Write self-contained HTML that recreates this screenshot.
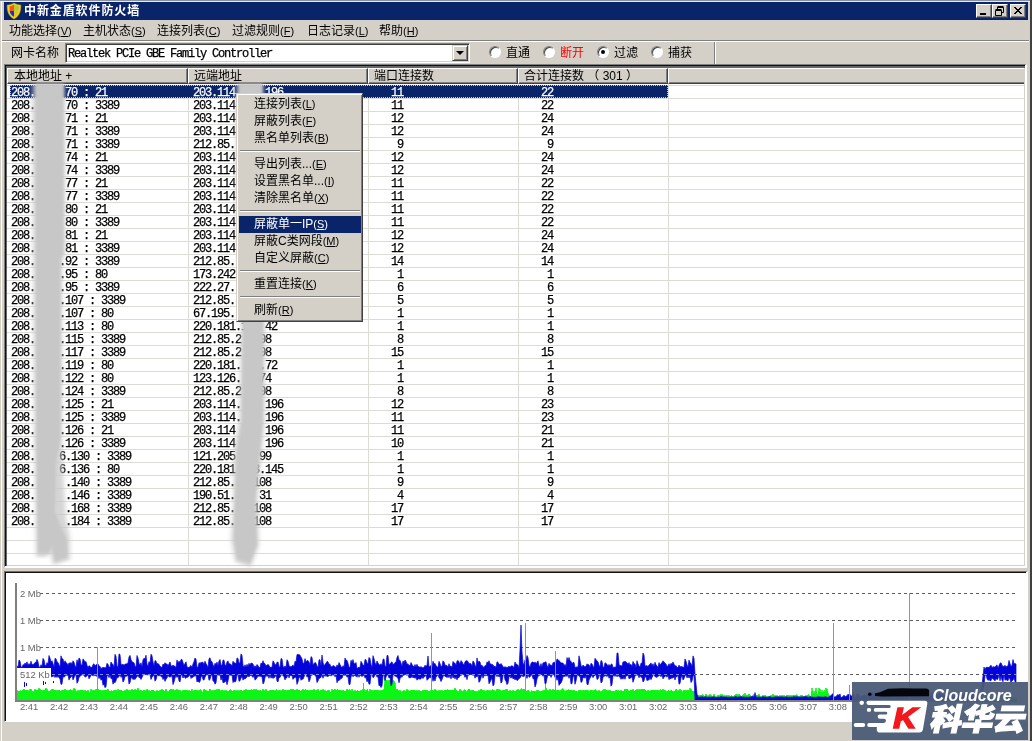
<!DOCTYPE html><html><head><meta charset="utf-8"><title>中新金盾软件防火墙</title><style>
*{box-sizing:border-box;margin:0;padding:0}
html,body{width:1032px;height:741px;overflow:hidden;background:#d4d0c8}
body{position:relative;font-family:"Liberation Sans", "Noto Sans CJK SC", sans-serif;font-size:12px;color:#000;line-height:1}
.abs{position:absolute}
.mono{font-family:"Liberation Mono","Noto Sans CJK SC",monospace;font-size:12px;letter-spacing:-1.2px;white-space:pre;-webkit-text-stroke:0.25px}
.cj{font-family:"Liberation Sans", "Noto Sans CJK SC", sans-serif;font-size:12px;white-space:pre}
u{text-decoration:underline;text-underline-offset:1px}
.lat{font-family:"Liberation Sans",sans-serif;font-size:11px}
#title{left:4px;top:2px;width:1024px;height:18px;background:#0a246a}
#title .t{left:20px;top:2px;color:#fff;font-weight:bold;font-size:12px;letter-spacing:0.9px;white-space:pre;line-height:14px}
.tbtn{top:2px;width:16px;height:14px;background:#d4d0c8;border:1px solid;border-color:#fff #404040 #404040 #fff;box-shadow:inset -1px -1px 0 #808080}
.menu-i{top:23px;height:16px;line-height:16px;white-space:pre}
.hdr{top:68px;height:16px;background:#d4d0c8;border-top:1px solid #fff;border-left:1px solid #fff;border-right:1px solid #404040;border-bottom:1px solid #404040;box-shadow:inset -1px -1px 0 #808080}
.hdr span{position:absolute;left:5px;top:0;line-height:14px;white-space:pre}
.row{position:absolute;left:7px;width:1017px;height:13px}
.row span{position:absolute;top:2px;line-height:13px}
.gl{position:absolute;left:7px;width:1017px;height:1px;background:#dddbd6}
.vl{position:absolute;top:84px;width:1px;height:481px;background:#dddbd6}
.radio{width:12px;height:12px;border-radius:50%;background:#fff;border:1px solid;border-color:#808080 #fff #fff #808080;box-shadow:inset 1px 1px 0 #404040}
.mi{position:absolute;left:2px;width:122px;height:17px;line-height:17px;padding-left:15px;white-space:pre}
.msep{position:absolute;left:3px;width:120px;height:2px;border-top:1px solid #808080;border-bottom:1px solid #fff}
</style></head><body><div id="root" class="abs" style="left:0;top:0;width:1032px;height:741px;will-change:transform">
<div class="abs" style="left:0;top:0;width:1032px;height:1px;background:#8890a4"></div>
<div class="abs" style="left:0;top:1px;width:1032px;height:1px;background:#e4ecfa"></div>
<div class="abs" style="left:1px;top:1px;width:1px;height:740px;background:#fff"></div>
<div class="abs" style="left:1030px;top:0;width:2px;height:741px;background:#404040"></div>
<div id="title" class="abs">
<svg class="abs" style="left:2px;top:0" width="16" height="18" viewBox="0 0 16 18">
<path d="M8 1 C6 2.4 3.5 3 1.2 3 C1 9 2.5 14 8 17 C13.5 14 15 9 14.8 3 C12.5 3 10 2.4 8 1Z" fill="#f0d820" stroke="#c8a810" stroke-width="0.6"/>
<path d="M8 2.5 C6.5 3.5 5 4 3.6 4.2 L3.6 9 L8 9Z" fill="#f05a18"/>
<path d="M3.6 9 L8 9 L8 14.8 C5.6 13.6 4 11.6 3.6 9Z" fill="#2030d8"/>
<path d="M8 2.5 C9.5 3.5 11.5 4 13 4.2 C13 9 12 13 8 15.4Z" fill="#d8c828"/>
<path d="M8 2.5 C9.5 3.5 11.5 4 13 4.2 L13 8 L8 8Z" fill="#b8c838"/>
</svg>
<div class="abs t">中新金盾软件防火墙</div>
<div class="abs tbtn" style="left:972px"><div class="abs" style="left:3px;top:8px;width:6px;height:2px;background:#000"></div></div>
<div class="abs tbtn" style="left:988px"><svg class="abs" style="left:1px;top:0" width="12" height="12" viewBox="0 0 12 12"><g fill="none" stroke="#000" stroke-width="1"><path d="M3.5 2.5h6v5h-2"/><path d="M3.5 1.5h6" /><path d="M1.5 5.5h6v5h-6z"/><path d="M1.5 4.5h6"/><path d="M3.5 2v2"/></g></svg></div>
<div class="abs tbtn" style="left:1006px"><svg class="abs" style="left:2px;top:1px" width="10" height="9" viewBox="0 0 10 9"><path d="M1 1l7 7M2 1l7 7M8 1l-7 7M9 1l-7 7" stroke="#000" stroke-width="1" fill="none"/></svg></div>
</div>
<div class="abs menu-i" style="left:9px">功能选择<span class="lat">(<u>V</u>)</span></div>
<div class="abs menu-i" style="left:83px">主机状态<span class="lat">(<u>S</u>)</span></div>
<div class="abs menu-i" style="left:157px">连接列表<span class="lat">(<u>C</u>)</span></div>
<div class="abs menu-i" style="left:232px">过滤规则<span class="lat">(<u>F</u>)</span></div>
<div class="abs menu-i" style="left:307px">日志记录<span class="lat">(<u>L</u>)</span></div>
<div class="abs menu-i" style="left:379px">帮助<span class="lat">(<u>H</u>)</span></div>
<div class="abs" style="left:2px;top:40px;width:1027px;height:1px;background:#808080"></div>
<div class="abs" style="left:2px;top:41px;width:1027px;height:1px;background:#fff"></div>
<div class="abs" style="left:714px;top:42px;width:1px;height:22px;background:#808080"></div>
<div class="abs" style="left:715px;top:42px;width:1px;height:22px;background:#fff"></div>
<div class="abs cj" style="left:11px;top:46px;line-height:14px">网卡名称</div>
<div class="abs" style="left:65px;top:43px;width:405px;height:20px;background:#fff;border:1px solid;border-color:#808080 #fff #fff #808080;box-shadow:inset 1px 1px 0 #404040, inset -1px -1px 0 #d4d0c8"></div>
<div class="abs mono" style="left:68px;top:47px;line-height:14px">Realtek PCIe GBE Family Controller</div>
<div class="abs" style="left:452px;top:45px;width:16px;height:16px;background:#d4d0c8;border:1px solid;border-color:#d4d0c8 #404040 #404040 #d4d0c8;box-shadow:inset 1px 1px 0 #fff, inset -1px -1px 0 #808080"><div class="abs" style="left:3px;top:5px;width:0;height:0;border-left:4px solid transparent;border-right:4px solid transparent;border-top:4px solid #000"></div></div>
<div class="abs radio" style="left:489px;top:46px"></div>
<div class="abs cj" style="left:506px;top:46px;line-height:14px;color:#000">直通</div>
<div class="abs radio" style="left:543px;top:46px"></div>
<div class="abs cj" style="left:560px;top:46px;line-height:14px;color:#f00">断开</div>
<div class="abs radio" style="left:597px;top:46px"><div class="abs" style="left:3px;top:3px;width:4px;height:4px;border-radius:50%;background:#000"></div></div>
<div class="abs cj" style="left:614px;top:46px;line-height:14px;color:#000">过滤</div>
<div class="abs radio" style="left:651px;top:46px"></div>
<div class="abs cj" style="left:668px;top:46px;line-height:14px;color:#000">捕获</div>
<div class="abs" style="left:4px;top:64px;width:1023px;height:504px;background:#fff;border:solid;border-width:1px 2px 2px 1px;border-color:#808080 #fff #fff #808080;box-shadow:inset 1px 1px 0 #101010, inset 2px 3px 0 #686868, inset -1px -1px 0 #d4d0c8"></div>
<div class="abs hdr cj" style="left:7px;width:181px"><span style="left:6px">本地地址 +</span></div>
<div class="abs hdr cj" style="left:188px;width:180px"><span>远端地址</span></div>
<div class="abs hdr cj" style="left:368px;width:150px"><span>端口连接数</span></div>
<div class="abs hdr cj" style="left:518px;width:150px"><span>合计连接数 （ 301 ）</span></div>
<div class="abs hdr cj" style="left:668px;width:356px;border-right:none;box-shadow:inset 0 -1px 0 #808080"><span></span></div>
<div class="gl" style="top:85px"></div>
<div class="gl" style="top:98px"></div>
<div class="gl" style="top:111px"></div>
<div class="gl" style="top:124px"></div>
<div class="gl" style="top:137px"></div>
<div class="gl" style="top:150px"></div>
<div class="gl" style="top:163px"></div>
<div class="gl" style="top:176px"></div>
<div class="gl" style="top:189px"></div>
<div class="gl" style="top:202px"></div>
<div class="gl" style="top:215px"></div>
<div class="gl" style="top:228px"></div>
<div class="gl" style="top:241px"></div>
<div class="gl" style="top:254px"></div>
<div class="gl" style="top:267px"></div>
<div class="gl" style="top:280px"></div>
<div class="gl" style="top:293px"></div>
<div class="gl" style="top:306px"></div>
<div class="gl" style="top:319px"></div>
<div class="gl" style="top:332px"></div>
<div class="gl" style="top:345px"></div>
<div class="gl" style="top:358px"></div>
<div class="gl" style="top:371px"></div>
<div class="gl" style="top:384px"></div>
<div class="gl" style="top:397px"></div>
<div class="gl" style="top:410px"></div>
<div class="gl" style="top:423px"></div>
<div class="gl" style="top:436px"></div>
<div class="gl" style="top:449px"></div>
<div class="gl" style="top:462px"></div>
<div class="gl" style="top:475px"></div>
<div class="gl" style="top:488px"></div>
<div class="gl" style="top:501px"></div>
<div class="gl" style="top:514px"></div>
<div class="gl" style="top:527px"></div>
<div class="gl" style="top:540px"></div>
<div class="gl" style="top:553px"></div>
<div class="vl" style="left:188px"></div>
<div class="vl" style="left:368px"></div>
<div class="vl" style="left:518px"></div>
<div class="vl" style="left:668px"></div>
<div class="abs" style="left:10px;top:85px;width:658px;height:13px;background:#0a246a;outline:1px dotted #d8c890;outline-offset:-1px"></div>
<div class="row mono" style="top:85px;color:#fff;"><span style="left:4px">208.     70 : 21</span><span style="left:186px">203.114     196</span><span style="left:384px">11</span><span style="left:534px">22</span></div>
<div class="row mono" style="top:98px;"><span style="left:4px">208.     70 : 3389</span><span style="left:186px">203.114</span><span style="left:384px">11</span><span style="left:534px">22</span></div>
<div class="row mono" style="top:111px;"><span style="left:4px">208.     71 : 21</span><span style="left:186px">203.114</span><span style="left:384px">12</span><span style="left:534px">24</span></div>
<div class="row mono" style="top:124px;"><span style="left:4px">208.     71 : 3389</span><span style="left:186px">203.114</span><span style="left:384px">12</span><span style="left:534px">24</span></div>
<div class="row mono" style="top:137px;"><span style="left:4px">208.     71 : 3389</span><span style="left:186px">212.85.</span><span style="left:390px">9</span><span style="left:540px">9</span></div>
<div class="row mono" style="top:150px;"><span style="left:4px">208.     74 : 21</span><span style="left:186px">203.114</span><span style="left:384px">12</span><span style="left:534px">24</span></div>
<div class="row mono" style="top:163px;"><span style="left:4px">208.     74 : 3389</span><span style="left:186px">203.114</span><span style="left:384px">12</span><span style="left:534px">24</span></div>
<div class="row mono" style="top:176px;"><span style="left:4px">208.     77 : 21</span><span style="left:186px">203.114</span><span style="left:384px">11</span><span style="left:534px">22</span></div>
<div class="row mono" style="top:189px;"><span style="left:4px">208.     77 : 3389</span><span style="left:186px">203.114</span><span style="left:384px">11</span><span style="left:534px">22</span></div>
<div class="row mono" style="top:202px;"><span style="left:4px">208.     80 : 21</span><span style="left:186px">203.114</span><span style="left:384px">11</span><span style="left:534px">22</span></div>
<div class="row mono" style="top:215px;"><span style="left:4px">208.     80 : 3389</span><span style="left:186px">203.114</span><span style="left:384px">11</span><span style="left:534px">22</span></div>
<div class="row mono" style="top:228px;"><span style="left:4px">208.     81 : 21</span><span style="left:186px">203.114</span><span style="left:384px">12</span><span style="left:534px">24</span></div>
<div class="row mono" style="top:241px;"><span style="left:4px">208.     81 : 3389</span><span style="left:186px">203.114</span><span style="left:384px">12</span><span style="left:534px">24</span></div>
<div class="row mono" style="top:254px;"><span style="left:4px">208.    .92 : 3389</span><span style="left:186px">212.85.</span><span style="left:384px">14</span><span style="left:534px">14</span></div>
<div class="row mono" style="top:267px;"><span style="left:4px">208.    .95 : 80</span><span style="left:186px">173.242</span><span style="left:390px">1</span><span style="left:540px">1</span></div>
<div class="row mono" style="top:280px;"><span style="left:4px">208.    .95 : 3389</span><span style="left:186px">222.27.</span><span style="left:390px">6</span><span style="left:540px">6</span></div>
<div class="row mono" style="top:293px;"><span style="left:4px">208.    .107 : 3389</span><span style="left:186px">212.85.</span><span style="left:390px">5</span><span style="left:540px">5</span></div>
<div class="row mono" style="top:306px;"><span style="left:4px">208.    .107 : 80</span><span style="left:186px">67.195.</span><span style="left:390px">1</span><span style="left:540px">1</span></div>
<div class="row mono" style="top:319px;"><span style="left:4px">208.    .113 : 80</span><span style="left:186px">220.181.1   42</span><span style="left:390px">1</span><span style="left:540px">1</span></div>
<div class="row mono" style="top:332px;"><span style="left:4px">208.    .115 : 3389</span><span style="left:186px">212.85.2   08</span><span style="left:390px">8</span><span style="left:540px">8</span></div>
<div class="row mono" style="top:345px;"><span style="left:4px">208.    .117 : 3389</span><span style="left:186px">212.85.2   08</span><span style="left:384px">15</span><span style="left:534px">15</span></div>
<div class="row mono" style="top:358px;"><span style="left:4px">208.    .119 : 80</span><span style="left:186px">220.181.   .72</span><span style="left:390px">1</span><span style="left:540px">1</span></div>
<div class="row mono" style="top:371px;"><span style="left:4px">208.    .122 : 80</span><span style="left:186px">123.126.   74</span><span style="left:390px">1</span><span style="left:540px">1</span></div>
<div class="row mono" style="top:384px;"><span style="left:4px">208.    .124 : 3389</span><span style="left:186px">212.85.2   08</span><span style="left:390px">8</span><span style="left:540px">8</span></div>
<div class="row mono" style="top:397px;"><span style="left:4px">208.    .125 : 21</span><span style="left:186px">203.114.    196</span><span style="left:384px">12</span><span style="left:534px">23</span></div>
<div class="row mono" style="top:410px;"><span style="left:4px">208.    .125 : 3389</span><span style="left:186px">203.114.    196</span><span style="left:384px">11</span><span style="left:534px">23</span></div>
<div class="row mono" style="top:423px;"><span style="left:4px">208.    .126 : 21</span><span style="left:186px">203.114     196</span><span style="left:384px">11</span><span style="left:534px">21</span></div>
<div class="row mono" style="top:436px;"><span style="left:4px">208.    .126 : 3389</span><span style="left:186px">203.114     196</span><span style="left:384px">10</span><span style="left:534px">21</span></div>
<div class="row mono" style="top:449px;"><span style="left:4px">208.    6.130 : 3389</span><span style="left:186px">121.205    99</span><span style="left:390px">1</span><span style="left:540px">1</span></div>
<div class="row mono" style="top:462px;"><span style="left:4px">208.    6.136 : 80</span><span style="left:186px">220.181   3.145</span><span style="left:390px">1</span><span style="left:540px">1</span></div>
<div class="row mono" style="top:475px;"><span style="left:4px">208.     .140 : 3389</span><span style="left:186px">212.85.   108</span><span style="left:390px">9</span><span style="left:540px">9</span></div>
<div class="row mono" style="top:488px;"><span style="left:4px">208.     .146 : 3389</span><span style="left:186px">190.51.    31</span><span style="left:390px">4</span><span style="left:540px">4</span></div>
<div class="row mono" style="top:501px;"><span style="left:4px">208.     .168 : 3389</span><span style="left:186px">212.85.   108</span><span style="left:384px">17</span><span style="left:534px">17</span></div>
<div class="row mono" style="top:514px;"><span style="left:4px">208.     .184 : 3389</span><span style="left:186px">212.85.   108</span><span style="left:384px">17</span><span style="left:534px">17</span></div>
<svg class="abs" style="left:0;top:60px" width="400" height="520" viewBox="0 60 400 520">
<defs><filter id="bl" x="-30%" y="-5%" width="160%" height="110%"><feGaussianBlur stdDeviation="2.2 1.5"/></filter>
<filter id="bl2" x="-30%" y="-5%" width="160%" height="110%"><feGaussianBlur stdDeviation="1.1"/></filter></defs>
<g filter="url(#bl)" fill="#c8c8c8" opacity="0.75">
<path d="M32 84 L65 84 L65 254 L62 262 L62 440 L63 470 L66 518 L70 538 L70 560 L53 565 L50 552 L47 557 L36 557 L34 440 Z"/>
<path d="M236 84 L264 84 L265 330 L265 420 L262 450 L258 500 L259 545 L251 567 L235 562 L231 540 L233 500 L234 450 L239 420 L241 330 L236 200 Z"/>
</g>
<g filter="url(#bl2)" fill="#c7c7c7">
<path d="M35.5 84 L63.5 84 L63.5 254 L60.5 260 L60.5 440 L56 462 L55 512 L61 527 L67 540 L67.5 557 L55 561.5 L51.5 545 L49.5 553 L38 553 L36.5 440 Z"/>
<path d="M239 84 L262 84 L263 330 L263 420 L260 450 L255 500 L257 545 L250 563 L237 559 L234 540 L235 500 L237 450 L242 420 L243 330 L239 200 Z"/>
</g>
</svg>
<div class="abs cj" style="left:236px;top:93px;width:127px;height:229px;background:#d4d0c8;border:1px solid;border-color:#d4d0c8 #404040 #404040 #d4d0c8;box-shadow:inset 1px 1px 0 #fff, inset -1px -1px 0 #808080">
<div class="mi" style="top:2px;">连接列表<span class="lat">(<u>L</u>)</span></div>
<div class="mi" style="top:19px;">屏蔽列表<span class="lat">(<u>F</u>)</span></div>
<div class="mi" style="top:36px;">黑名单列表<span class="lat">(<u>B</u>)</span></div>
<div class="msep" style="top:56px"></div>
<div class="mi" style="top:62px;">导出列表...<span class="lat">(<u>E</u>)</span></div>
<div class="mi" style="top:79px;">设置黑名单...<span class="lat">(<u>I</u>)</span></div>
<div class="mi" style="top:96px;">清除黑名单<span class="lat">(<u>X</u>)</span></div>
<div class="msep" style="top:116px"></div>
<div class="mi" style="top:122px;background:#0a246a;color:#fff;">屏蔽单一IP<span class="lat">(<u>S</u>)</span></div>
<div class="mi" style="top:139px;">屏蔽C类网段<span class="lat">(<u>M</u>)</span></div>
<div class="mi" style="top:156px;">自定义屏蔽<span class="lat">(<u>C</u>)</span></div>
<div class="msep" style="top:176px"></div>
<div class="mi" style="top:182px;">重置连接<span class="lat">(<u>K</u>)</span></div>
<div class="msep" style="top:202px"></div>
<div class="mi" style="top:208px;">刷新<span class="lat">(<u>R</u>)</span></div>
</div>
<div class="abs" style="left:4px;top:571px;width:1024px;height:151px;background:#fff;border:solid;border-width:1px 2px 1px 1px;border-color:#707070 #fff #fff #707070;box-shadow:inset 1px 1px 0 #101010"></div>
<svg class="abs" style="left:0;top:0" width="1032" height="741" viewBox="0 0 1032 741" shape-rendering="crispEdges"><line x1="40" y1="593.5" x2="1016" y2="593.5" stroke="#5c5c5c" stroke-width="1" stroke-dasharray="3 3"/><line x1="40" y1="620.5" x2="1016" y2="620.5" stroke="#5c5c5c" stroke-width="1" stroke-dasharray="3 3"/><line x1="40" y1="647.5" x2="1016" y2="647.5" stroke="#5c5c5c" stroke-width="1" stroke-dasharray="3 3"/><line x1="40" y1="674.5" x2="1016" y2="674.5" stroke="#5c5c5c" stroke-width="1" stroke-dasharray="3 3"/><path d="M17,701 L17,691.4 L18,690.6 L19,691.5 L20,690.5 L21,690.9 L22,691.2 L23,689.7 L24,689.3 L25,690.9 L26,690.0 L27,690.0 L28,690.1 L29,692.0 L30,689.4 L31,689.2 L32,690.8 L33,692.0 L34,691.0 L35,688.7 L36,690.4 L37,689.9 L38,690.3 L39,688.4 L40,690.2 L41,689.6 L42,690.9 L43,690.3 L44,690.3 L45,690.6 L46,688.4 L47,688.8 L48,691.7 L49,690.6 L50,691.6 L51,689.6 L52,689.6 L53,688.9 L54,690.9 L55,690.1 L56,690.6 L57,690.8 L58,691.1 L59,689.5 L60,691.4 L61,690.9 L62,690.3 L63,690.3 L64,690.0 L65,689.6 L66,690.1 L67,690.8 L68,690.8 L69,690.3 L70,690.4 L71,689.6 L72,691.2 L73,690.2 L74,688.4 L75,688.9 L76,691.0 L77,692.2 L78,690.2 L79,691.1 L80,690.4 L81,690.5 L82,689.7 L83,690.8 L84,690.9 L85,691.1 L86,690.9 L87,691.8 L88,689.9 L89,692.6 L90,692.6 L91,689.3 L92,690.9 L93,690.5 L94,690.0 L95,691.4 L96,689.0 L97,689.0 L98,690.0 L99,689.7 L100,690.5 L101,690.4 L102,691.8 L103,689.9 L104,690.2 L105,690.4 L106,689.9 L107,690.4 L108,688.6 L109,691.1 L110,691.6 L111,690.6 L112,690.7 L113,691.8 L114,690.1 L115,690.5 L116,689.9 L117,692.1 L118,689.2 L119,690.1 L120,690.3 L121,690.1 L122,690.8 L123,691.4 L124,690.8 L125,690.5 L126,690.4 L127,689.4 L128,691.1 L129,690.1 L130,690.5 L131,690.9 L132,688.8 L133,690.6 L134,690.0 L135,689.5 L136,690.0 L137,690.6 L138,687.8 L139,690.5 L140,691.1 L141,689.9 L142,691.8 L143,689.5 L144,690.8 L145,690.2 L146,691.0 L147,688.7 L148,692.1 L149,690.3 L150,691.8 L151,690.7 L152,690.2 L153,690.4 L154,690.6 L155,692.4 L156,691.3 L157,690.7 L158,691.2 L159,691.5 L160,690.3 L161,689.9 L162,689.7 L163,689.8 L164,691.1 L165,691.5 L166,689.4 L167,691.1 L168,692.5 L169,690.8 L170,689.9 L171,688.5 L172,690.0 L173,689.4 L174,691.6 L175,690.0 L176,690.5 L177,689.1 L178,690.6 L179,690.1 L180,690.3 L181,692.5 L182,691.1 L183,690.6 L184,690.1 L185,690.2 L186,690.0 L187,690.2 L188,691.0 L189,690.6 L190,691.3 L191,691.6 L192,689.1 L193,692.2 L194,690.0 L195,690.8 L196,690.0 L197,690.7 L198,690.7 L199,690.6 L200,689.9 L201,690.0 L202,692.9 L203,691.9 L204,688.7 L205,689.6 L206,690.9 L207,690.7 L208,691.6 L209,689.5 L210,688.6 L211,690.4 L212,690.8 L213,690.8 L214,690.4 L215,690.5 L216,689.6 L217,689.8 L218,689.5 L219,689.2 L220,690.4 L221,691.0 L222,689.9 L223,691.0 L224,690.2 L225,691.2 L226,690.5 L227,691.1 L228,691.1 L229,691.3 L230,689.5 L231,690.4 L232,691.7 L233,691.3 L234,689.8 L235,691.0 L236,690.5 L237,690.8 L238,691.0 L239,690.8 L240,691.0 L241,689.7 L242,691.4 L243,691.4 L244,690.0 L245,690.5 L246,689.0 L247,690.3 L248,690.1 L249,690.0 L250,690.8 L251,689.9 L252,690.0 L253,690.7 L254,689.3 L255,691.2 L256,689.4 L257,691.0 L258,689.7 L259,691.4 L260,690.0 L261,691.0 L262,691.3 L263,689.4 L264,691.1 L265,690.6 L266,689.4 L267,691.1 L268,691.5 L269,690.5 L270,690.5 L271,690.1 L272,690.3 L273,690.6 L274,690.0 L275,691.7 L276,689.8 L277,690.2 L278,691.1 L279,690.1 L280,690.5 L281,690.9 L282,690.4 L283,689.4 L284,690.7 L285,689.5 L286,691.3 L287,689.9 L288,690.3 L289,690.5 L290,689.8 L291,689.7 L292,689.8 L293,689.2 L294,690.7 L295,689.9 L296,690.8 L297,688.9 L298,690.6 L299,690.2 L300,690.5 L301,691.8 L302,690.0 L303,689.6 L304,690.2 L305,690.0 L306,689.8 L307,690.7 L308,689.9 L309,692.5 L310,689.9 L311,691.1 L312,689.5 L313,691.2 L314,689.2 L315,691.1 L316,690.0 L317,690.0 L318,689.1 L319,691.8 L320,690.7 L321,689.7 L322,691.3 L323,688.9 L324,690.4 L325,690.7 L326,690.7 L327,692.2 L328,690.0 L329,690.1 L330,692.3 L331,691.8 L332,689.3 L333,690.2 L334,690.1 L335,688.8 L336,690.7 L337,690.2 L338,689.6 L339,690.5 L340,690.4 L341,690.3 L342,692.1 L343,689.8 L344,691.2 L345,691.7 L346,690.5 L347,688.9 L348,690.3 L349,689.9 L350,689.7 L351,691.9 L352,689.2 L353,691.1 L354,691.2 L355,690.2 L356,691.6 L357,689.5 L358,690.8 L359,691.5 L360,690.6 L361,690.9 L362,690.5 L363,689.3 L364,688.8 L365,690.6 L366,691.2 L367,688.5 L368,691.3 L369,691.9 L370,689.4 L371,690.4 L372,690.1 L373,691.3 L374,690.4 L375,690.0 L376,691.0 L377,689.5 L378,690.6 L379,690.9 L380,690.5 L381,691.2 L382,690.1 L383,690.0 L384,689.6 L385,678.2 L386,680.7 L387,680.2 L388,681.0 L389,680.2 L390,680.5 L391,680.6 L392,681.7 L393,680.1 L394,680.6 L395,683.2 L396,691.1 L397,688.6 L398,690.2 L399,691.5 L400,690.4 L401,691.0 L402,692.5 L403,691.2 L404,689.9 L405,691.5 L406,690.8 L407,689.4 L408,690.6 L409,691.4 L410,690.7 L411,690.5 L412,689.9 L413,691.1 L414,689.9 L415,690.2 L416,691.5 L417,690.1 L418,691.1 L419,690.3 L420,691.0 L421,691.0 L422,691.4 L423,690.5 L424,690.2 L425,689.9 L426,690.8 L427,689.8 L428,691.0 L429,691.7 L430,690.7 L431,690.5 L432,690.1 L433,690.7 L434,690.7 L435,689.4 L436,690.5 L437,690.5 L438,692.2 L439,690.4 L440,691.3 L441,690.2 L442,690.3 L443,691.6 L444,690.8 L445,690.2 L446,690.4 L447,689.8 L448,690.0 L449,690.3 L450,690.7 L451,690.2 L452,690.7 L453,689.6 L454,690.5 L455,688.0 L456,689.9 L457,691.1 L458,691.9 L459,691.5 L460,689.4 L461,690.2 L462,691.2 L463,692.0 L464,689.7 L465,689.7 L466,691.1 L467,692.2 L468,690.2 L469,688.7 L470,690.0 L471,691.5 L472,690.1 L473,690.1 L474,690.9 L475,691.2 L476,690.9 L477,692.3 L478,691.4 L479,690.5 L480,690.6 L481,689.3 L482,689.7 L483,691.1 L484,690.1 L485,691.6 L486,691.3 L487,689.9 L488,690.8 L489,691.1 L490,690.3 L491,691.0 L492,690.3 L493,689.5 L494,690.6 L495,691.2 L496,691.4 L497,689.2 L498,689.4 L499,690.2 L500,689.5 L501,691.4 L502,691.1 L503,689.9 L504,690.8 L505,690.2 L506,689.4 L507,689.1 L508,691.7 L509,690.9 L510,690.3 L511,691.3 L512,691.2 L513,690.3 L514,691.3 L515,691.5 L516,690.8 L517,689.5 L518,689.6 L519,690.0 L520,690.7 L521,688.9 L522,688.9 L523,690.2 L524,688.7 L525,690.0 L526,690.7 L527,691.5 L528,689.6 L529,690.9 L530,693.0 L531,690.5 L532,691.3 L533,690.9 L534,691.6 L535,690.6 L536,691.6 L537,690.2 L538,690.6 L539,690.6 L540,692.0 L541,691.3 L542,691.0 L543,690.4 L544,690.8 L545,689.9 L546,688.4 L547,689.9 L548,690.5 L549,690.6 L550,688.8 L551,690.5 L552,689.7 L553,690.3 L554,689.7 L555,691.3 L556,690.4 L557,690.7 L558,689.7 L559,690.7 L560,690.9 L561,690.2 L562,689.2 L563,688.7 L564,690.4 L565,691.5 L566,691.3 L567,690.3 L568,689.8 L569,689.7 L570,691.1 L571,689.6 L572,691.0 L573,690.5 L574,689.6 L575,691.6 L576,690.9 L577,692.0 L578,691.1 L579,690.5 L580,690.4 L581,690.6 L582,691.1 L583,690.3 L584,690.3 L585,690.8 L586,690.2 L587,690.1 L588,690.0 L589,691.6 L590,690.7 L591,690.3 L592,690.3 L593,691.5 L594,690.1 L595,690.2 L596,689.7 L597,691.4 L598,691.6 L599,690.2 L600,692.2 L601,691.6 L602,691.3 L603,690.2 L604,689.5 L605,689.8 L606,690.1 L607,690.7 L608,691.1 L609,690.1 L610,690.9 L611,690.8 L612,691.8 L613,690.8 L614,691.6 L615,691.6 L616,689.8 L617,691.0 L618,690.1 L619,691.9 L620,690.5 L621,690.6 L622,690.9 L623,691.6 L624,689.5 L625,688.6 L626,690.2 L627,688.8 L628,689.7 L629,691.5 L630,691.4 L631,689.5 L632,691.0 L633,689.4 L634,691.3 L635,690.8 L636,690.0 L637,689.7 L638,690.2 L639,689.7 L640,689.8 L641,690.0 L642,688.9 L643,689.2 L644,689.2 L645,689.6 L646,691.3 L647,691.6 L648,689.8 L649,691.2 L650,691.2 L651,690.3 L652,690.4 L653,690.4 L654,690.4 L655,690.3 L656,690.7 L657,690.2 L658,690.3 L659,691.4 L660,689.8 L661,690.0 L662,690.0 L663,689.5 L664,690.3 L665,689.8 L666,692.0 L667,691.9 L668,689.5 L669,691.5 L670,691.0 L671,690.4 L672,690.6 L673,692.0 L674,691.6 L675,691.3 L676,688.8 L677,689.7 L678,692.1 L679,690.1 L680,689.4 L681,690.4 L682,691.7 L683,692.2 L684,690.2 L685,690.2 L686,690.5 L687,690.8 L688,689.6 L689,691.3 L690,688.3 L691,689.4 L692,690.6 L693,692.1 L694,690.8 L695,692.7 L696,694.4 L697,696.1 L698,694.7 L699,695.7 L700,695.4 L701,695.5 L702,694.7 L703,695.3 L704,695.5 L705,696.6 L706,694.3 L707,696.4 L708,695.4 L709,695.9 L710,694.3 L711,695.3 L712,696.6 L713,696.6 L714,693.8 L715,696.6 L716,696.6 L717,696.6 L718,694.8 L719,696.0 L720,695.2 L721,694.8 L722,694.6 L723,695.3 L724,696.6 L725,695.0 L726,696.6 L727,694.8 L728,696.4 L729,695.4 L730,696.6 L731,695.6 L732,696.0 L733,696.6 L734,695.9 L735,695.1 L736,694.5 L737,694.0 L738,696.6 L739,694.0 L740,694.9 L741,696.6 L742,695.8 L743,695.6 L744,693.9 L745,693.3 L746,695.7 L747,695.3 L748,694.9 L749,693.7 L750,695.1 L751,696.1 L752,696.6 L753,695.0 L754,694.9 L755,696.6 L756,695.8 L757,695.2 L758,695.2 L759,694.2 L760,696.6 L761,696.6 L762,697.0 L763,694.6 L764,696.6 L765,695.2 L766,695.5 L767,696.6 L768,696.6 L769,695.9 L770,696.6 L771,694.9 L772,696.6 L773,694.2 L774,696.6 L775,695.0 L776,696.6 L777,695.4 L778,695.9 L779,696.6 L780,694.9 L781,696.6 L782,694.7 L783,696.6 L784,694.7 L785,696.6 L786,695.9 L787,694.6 L788,695.5 L789,695.4 L790,695.7 L791,695.4 L792,695.7 L793,695.4 L794,695.5 L795,695.4 L796,694.7 L797,694.9 L798,696.6 L799,696.6 L800,696.8 L801,694.9 L802,695.6 L803,695.5 L804,696.6 L805,696.6 L806,695.4 L807,696.0 L808,694.9 L809,694.8 L810,696.6 L811,696.1 L812,688.0 L813,694.5 L814,690.7 L815,694.5 L816,688.0 L817,694.5 L818,694.0 L819,688.2 L820,689.0 L821,694.5 L822,690.1 L823,694.5 L824,689.5 L825,694.5 L826,688.4 L827,689.4 L828,693.0 L829,694.5 L830,696.8 L831,696.6 L832,698.0 L833,697.9 L834,697.3 L835,697.0 L836,696.9 L837,696.6 L838,697.0 L839,696.7 L840,697.5 L841,697.1 L842,697.1 L843,697.3 L844,696.5 L845,697.2 L846,697.0 L847,696.6 L848,697.6 L849,696.8 L850,696.9 L851,697.3 L852,697.1 L853,696.5 L854,697.3 L855,697.0 L856,697.6 L857,697.0 L858,696.9 L859,697.4 L860,696.9 L861,697.2 L862,697.3 L863,696.6 L864,696.6 L865,697.1 L866,696.9 L867,696.9 L868,697.4 L869,697.3 L870,696.4 L871,697.3 L872,697.3 L873,697.1 L874,696.7 L875,696.8 L876,697.0 L877,696.2 L878,697.1 L879,696.8 L880,697.1 L881,697.0 L882,697.1 L883,697.9 L884,696.7 L885,697.1 L886,697.7 L887,696.7 L888,696.4 L889,696.9 L890,697.1 L891,696.6 L892,697.1 L893,696.8 L894,695.9 L895,696.8 L896,696.7 L897,697.2 L898,696.7 L899,697.1 L900,698.1 L901,697.0 L902,697.3 L903,697.2 L904,697.0 L905,697.3 L906,697.3 L907,697.8 L908,697.7 L909,696.2 L910,697.2 L911,697.7 L912,697.0 L913,697.3 L914,696.9 L915,696.8 L916,697.4 L917,697.8 L918,698.0 L919,697.5 L920,696.7 L921,696.8 L922,697.4 L923,697.6 L924,697.8 L925,696.9 L926,697.0 L927,697.1 L928,696.5 L929,697.5 L930,697.8 L931,696.7 L932,696.5 L933,697.2 L934,697.1 L935,697.4 L936,697.0 L937,697.2 L938,697.4 L939,696.3 L940,697.7 L941,697.5 L942,696.2 L943,696.5 L944,696.8 L945,696.2 L946,697.8 L947,696.3 L948,697.5 L949,697.1 L950,697.0 L951,698.2 L952,696.4 L953,697.1 L954,697.0 L955,696.3 L956,699.2 L957,697.1 L958,696.2 L959,696.3 L960,697.6 L961,698.0 L962,697.6 L963,696.4 L964,696.7 L965,696.5 L966,697.0 L967,696.8 L968,697.0 L969,696.1 L970,696.3 L971,696.8 L972,697.6 L973,696.8 L974,696.9 L975,695.9 L976,697.0 L977,697.3 L978,696.9 L979,697.3 L980,696.7 L981,695.8 L982,697.5 L983,697.5 L984,697.5 L985,697.6 L986,697.9 L987,697.8 L988,698.3 L989,697.1 L990,697.2 L991,697.4 L992,698.0 L993,697.6 L994,697.1 L995,697.3 L996,697.0 L997,697.9 L998,697.6 L999,697.4 L1000,697.3 L1001,697.3 L1002,697.4 L1003,697.0 L1004,697.4 L1005,697.7 L1006,697.3 L1007,698.6 L1008,697.5 L1009,697.4 L1010,697.3 L1011,697.2 L1012,698.2 L1013,697.0 L1014,698.5 L1015,697.3 L1016,698.0 L1016,701 Z" fill="#0cf614" stroke="#0cf614" stroke-width="0.8"/><path d="M17,665.9 L18,667.5 L19,660.0 L20,660.9 L21,666.5 L22,667.5 L23,664.6 L24,665.3 L25,663.0 L26,664.4 L27,661.8 L28,665.4 L29,663.6 L30,665.0 L31,661.2 L32,664.6 L33,664.8 L34,663.8 L35,662.6 L36,662.6 L37,659.4 L38,661.9 L39,666.9 L40,667.5 L41,664.7 L42,666.5 L43,658.4 L44,659.8 L45,665.5 L46,665.7 L47,662.6 L48,664.4 L49,655.5 L50,658.1 L51,662.0 L52,660.7 L53,663.6 L54,667.2 L55,658.4 L56,658.7 L57,661.9 L58,662.5 L59,665.0 L60,667.0 L61,655.8 L62,658.8 L63,659.0 L64,663.0 L65,660.8 L66,662.8 L67,663.3 L68,665.4 L69,662.8 L70,663.6 L71,662.4 L72,664.6 L73,660.8 L74,662.3 L75,665.8 L76,667.5 L77,659.8 L78,662.9 L79,658.0 L80,658.9 L81,664.9 L82,665.2 L83,658.9 L84,660.2 L85,662.1 L86,661.6 L87,665.3 L88,667.5 L89,665.7 L90,666.3 L91,667.4 L92,667.5 L93,664.5 L94,663.8 L95,666.1 L96,664.9 L97,663.9 L98,663.8 L99,666.3 L100,666.3 L101,668.9 L102,667.5 L103,668.0 L104,667.1 L105,668.2 L106,667.5 L107,663.3 L108,664.3 L109,667.1 L110,667.5 L111,662.0 L112,663.5 L113,664.6 L114,667.5 L115,654.3 L116,656.3 L117,666.2 L118,666.9 L119,653.9 L120,654.5 L121,664.4 L122,664.9 L123,664.1 L124,665.6 L125,664.1 L126,664.0 L127,663.7 L128,663.0 L129,657.0 L130,655.4 L131,659.7 L132,661.8 L133,662.2 L134,662.7 L135,666.1 L136,667.3 L137,655.5 L138,658.1 L139,663.3 L140,665.2 L141,662.8 L142,666.9 L143,659.8 L144,658.2 L145,658.9 L146,655.2 L147,664.2 L148,666.5 L149,661.6 L150,663.3 L151,654.2 L152,655.8 L153,662.1 L154,666.0 L155,660.6 L156,661.1 L157,663.9 L158,663.4 L159,664.4 L160,666.3 L161,667.1 L162,667.5 L163,664.0 L164,664.9 L165,662.7 L166,664.1 L167,663.9 L168,665.7 L169,663.9 L170,661.9 L171,665.8 L172,666.5 L173,665.0 L174,665.9 L175,666.3 L176,667.5 L177,659.9 L178,663.1 L179,661.1 L180,662.5 L181,659.5 L182,659.5 L183,662.5 L184,665.5 L185,663.5 L186,661.8 L187,666.8 L188,667.5 L189,667.4 L190,666.3 L191,665.4 L192,667.4 L193,663.9 L194,661.5 L195,658.0 L196,659.3 L197,667.1 L198,667.5 L199,662.7 L200,663.4 L201,662.2 L202,662.6 L203,662.2 L204,664.5 L205,661.2 L206,663.4 L207,665.3 L208,667.5 L209,658.7 L210,657.8 L211,661.3 L212,661.7 L213,664.7 L214,667.0 L215,663.2 L216,664.5 L217,662.1 L218,665.8 L219,661.0 L220,659.5 L221,665.0 L222,665.6 L223,660.0 L224,660.2 L225,664.9 L226,665.8 L227,661.9 L228,660.9 L229,664.3 L230,663.6 L231,664.6 L232,666.2 L233,661.2 L234,663.0 L235,662.8 L236,664.3 L237,658.0 L238,658.4 L239,663.3 L240,662.7 L241,653.9 L242,655.4 L243,665.2 L244,667.5 L245,664.8 L246,667.3 L247,664.3 L248,666.7 L249,663.3 L250,665.2 L251,663.0 L252,663.3 L253,664.0 L254,667.5 L255,665.7 L256,667.5 L257,664.5 L258,665.6 L259,667.7 L260,667.5 L261,662.9 L262,664.1 L263,660.7 L264,663.3 L265,663.7 L266,665.9 L267,665.3 L268,664.3 L269,665.6 L270,667.5 L271,667.1 L272,667.4 L273,660.8 L274,662.3 L275,664.7 L276,664.7 L277,662.2 L278,662.0 L279,666.3 L280,667.5 L281,658.6 L282,658.9 L283,666.2 L284,667.5 L285,665.9 L286,667.5 L287,659.7 L288,661.2 L289,665.4 L290,666.5 L291,666.9 L292,666.2 L293,664.9 L294,667.1 L295,661.2 L296,662.2 L297,654.6 L298,654.5 L299,654.6 L300,655.2 L301,657.1 L302,658.9 L303,663.6 L304,663.4 L305,658.6 L306,662.3 L307,660.5 L308,660.6 L309,662.0 L310,665.0 L311,656.7 L312,657.3 L313,664.9 L314,663.5 L315,662.4 L316,663.2 L317,666.0 L318,667.5 L319,660.0 L320,659.6 L321,666.0 L322,655.0 L323,662.5 L324,665.5 L325,664.4 L326,663.1 L327,661.4 L328,661.8 L329,664.2 L330,664.3 L331,666.9 L332,666.8 L333,665.5 L334,665.9 L335,666.7 L336,667.5 L337,664.9 L338,666.6 L339,662.6 L340,664.6 L341,666.5 L342,667.5 L343,665.7 L344,667.4 L345,658.0 L346,660.3 L347,660.3 L348,663.2 L349,667.4 L350,667.5 L351,660.2 L352,662.6 L353,659.6 L354,663.7 L355,663.7 L356,662.5 L357,668.6 L358,667.5 L359,667.4 L360,667.5 L361,661.3 L362,663.0 L363,665.3 L364,665.7 L365,659.5 L366,659.7 L367,662.9 L368,664.0 L369,657.4 L370,658.4 L371,664.4 L372,667.5 L373,655.7 L374,658.5 L375,662.8 L376,664.9 L377,661.0 L378,663.0 L379,664.5 L380,665.2 L381,663.7 L382,665.7 L383,659.3 L384,658.9 L385,665.8 L386,666.9 L387,655.4 L388,655.5 L389,665.0 L390,663.7 L391,662.6 L392,661.8 L393,664.5 L394,664.1 L395,662.5 L396,662.3 L397,657.5 L398,655.5 L399,660.2 L400,660.3 L401,663.0 L402,666.5 L403,660.9 L404,662.4 L405,660.0 L406,661.4 L407,664.2 L408,663.9 L409,665.4 L410,665.7 L411,662.5 L412,664.4 L413,665.9 L414,667.1 L415,664.5 L416,666.7 L417,664.3 L418,666.7 L419,666.6 L420,667.5 L421,666.6 L422,667.5 L423,667.8 L424,667.5 L425,665.2 L426,666.2 L427,665.4 L428,656.0 L429,667.0 L430,666.5 L431,665.3 L432,667.5 L433,661.2 L434,663.9 L435,663.4 L436,665.8 L437,666.5 L438,667.5 L439,661.3 L440,663.4 L441,666.4 L442,666.4 L443,660.8 L444,661.9 L445,664.9 L446,665.5 L447,665.4 L448,667.5 L449,663.7 L450,666.6 L451,666.0 L452,667.5 L453,661.4 L454,663.0 L455,663.1 L456,665.5 L457,661.0 L458,660.4 L459,662.1 L460,664.1 L461,660.6 L462,661.8 L463,663.7 L464,665.3 L465,661.7 L466,660.8 L467,660.7 L468,661.6 L469,663.7 L470,663.6 L471,663.7 L472,666.3 L473,660.9 L474,662.2 L475,665.2 L476,667.5 L477,657.9 L478,662.4 L479,661.1 L480,662.1 L481,665.8 L482,665.2 L483,666.8 L484,667.5 L485,665.5 L486,666.0 L487,661.8 L488,662.9 L489,660.7 L490,663.7 L491,664.2 L492,664.4 L493,664.8 L494,666.7 L495,666.1 L496,667.5 L497,661.8 L498,662.3 L499,664.3 L500,664.6 L501,663.5 L502,664.9 L503,666.7 L504,667.5 L505,666.6 L506,667.5 L507,667.2 L508,667.5 L509,666.0 L510,667.5 L511,665.9 L512,665.9 L513,666.3 L514,667.5 L515,662.0 L516,664.2 L517,664.3 L518,665.3 L519,668.3 L520,650.0 L521,625.0 L522,652.0 L523,662.9 L524,665.1 L525,659.8 L526,660.2 L527,655.5 L528,657.7 L529,665.4 L530,667.5 L531,663.4 L532,662.1 L533,662.1 L534,662.9 L535,661.9 L536,663.4 L537,662.4 L538,660.8 L539,665.2 L540,666.9 L541,663.6 L542,667.1 L543,662.7 L544,663.0 L545,661.9 L546,661.9 L547,665.4 L548,667.5 L549,663.3 L550,665.5 L551,664.7 L552,666.2 L553,662.6 L554,662.7 L555,661.8 L556,662.3 L557,659.0 L558,659.5 L559,660.7 L560,661.5 L561,663.0 L562,663.0 L563,663.0 L564,665.8 L565,664.3 L566,666.9 L567,657.5 L568,660.5 L569,657.4 L570,660.5 L571,661.5 L572,663.4 L573,662.4 L574,662.4 L575,667.3 L576,667.5 L577,666.6 L578,667.5 L579,655.8 L580,660.2 L581,665.6 L582,667.5 L583,665.0 L584,666.3 L585,666.8 L586,666.4 L587,663.8 L588,664.8 L589,664.8 L590,667.5 L591,663.3 L592,664.0 L593,666.3 L594,667.5 L595,658.3 L596,659.6 L597,661.0 L598,661.8 L599,665.3 L600,666.7 L601,660.4 L602,661.2 L603,667.3 L604,667.5 L605,662.7 L606,663.5 L607,664.3 L608,666.3 L609,664.4 L610,666.6 L611,664.3 L612,663.9 L613,667.4 L614,667.5 L615,666.8 L616,667.5 L617,653.0 L618,653.0 L619,664.3 L620,665.8 L621,665.5 L622,666.3 L623,661.8 L624,661.9 L625,661.3 L626,662.0 L627,662.8 L628,664.4 L629,662.6 L630,665.2 L631,664.3 L632,666.8 L633,661.4 L634,663.7 L635,663.9 L636,667.5 L637,660.7 L638,663.8 L639,665.9 L640,667.3 L641,663.1 L642,663.5 L643,653.0 L644,655.0 L645,665.7 L646,666.2 L647,665.4 L648,666.6 L649,665.0 L650,664.2 L651,662.9 L652,665.8 L653,663.7 L654,666.7 L655,662.3 L656,664.6 L657,666.1 L658,667.5 L659,662.6 L660,664.9 L661,663.6 L662,662.7 L663,660.8 L664,661.9 L665,663.2 L666,664.0 L667,666.4 L668,666.0 L669,663.7 L670,666.0 L671,663.3 L672,664.3 L673,661.9 L674,664.1 L675,666.3 L676,665.5 L677,667.6 L678,667.5 L679,665.1 L680,666.7 L681,666.8 L682,666.5 L683,667.3 L684,667.5 L685,658.9 L686,661.1 L687,665.0 L688,666.9 L689,660.0 L690,662.7 L691,663.5 L692,666.8 L693,655.9 L694,658.3 L695,674.0 L696,684.0 L697,694.0 L698,697.2 L699,697.1 L700,696.9 L701,697.1 L702,696.7 L703,696.9 L704,697.3 L705,696.8 L706,696.8 L707,697.3 L708,697.2 L709,697.0 L710,697.2 L711,697.1 L712,697.0 L713,697.0 L714,696.7 L715,697.2 L716,697.4 L717,697.4 L718,697.1 L719,697.3 L720,697.0 L721,696.6 L722,696.8 L723,697.1 L724,696.9 L725,697.0 L726,697.1 L727,696.9 L728,697.5 L729,696.9 L730,697.3 L731,696.9 L732,697.2 L733,697.0 L734,697.3 L735,696.7 L736,696.7 L737,697.0 L738,697.2 L739,696.8 L740,697.1 L741,696.6 L742,696.9 L743,697.2 L744,696.7 L745,697.4 L746,697.0 L747,697.2 L748,697.2 L749,697.1 L750,696.9 L751,696.9 L752,696.4 L753,696.6 L754,697.2 L755,692.5 L756,697.0 L757,697.2 L758,697.2 L759,696.9 L760,697.0 L761,697.4 L762,697.0 L763,696.7 L764,696.9 L765,697.0 L766,697.1 L767,697.4 L768,697.0 L769,696.9 L770,696.6 L771,697.2 L772,697.5 L773,697.3 L774,697.0 L775,697.1 L776,696.7 L777,697.1 L778,696.7 L779,697.0 L780,697.1 L781,696.7 L782,697.0 L783,696.9 L784,697.1 L785,697.0 L786,697.0 L787,696.8 L788,697.4 L789,697.0 L790,697.2 L791,697.1 L792,697.1 L793,697.1 L794,696.4 L795,697.2 L796,696.5 L797,697.1 L798,696.8 L799,697.1 L800,696.9 L801,697.0 L802,696.9 L803,696.9 L804,696.8 L805,696.8 L806,696.6 L807,697.0 L808,696.9 L809,697.4 L810,696.6 L811,697.0 L812,697.2 L813,697.1 L814,697.4 L815,697.2 L816,697.3 L817,696.9 L818,696.9 L819,696.8 L820,697.1 L821,697.0 L822,697.1 L823,697.0 L824,697.2 L825,696.8 L826,696.7 L827,697.6 L828,697.2 L829,696.9 L830,696.3 L831,695.6 L832,694.3 L833,693.8 L834,696.8 L835,697.3 L836,696.7 L837,695.2 L838,694.6 L839,695.4 L840,693.9 L841,698.3 L842,696.9 L843,696.8 L844,695.1 L845,697.0 L846,696.2 L847,695.9 L848,694.1 L849,695.0 L850,694.4 L851,695.6 L852,696.6 L853,693.3 L854,694.2 L855,697.5 L856,697.8 L857,693.6 L858,695.8 L859,693.6 L860,695.8 L861,697.5 L862,695.7 L863,695.5 L864,695.5 L865,694.6 L866,696.0 L867,694.7 L868,694.5 L869,698.2 L870,695.8 L871,696.9 L872,691.4 L873,697.4 L874,692.4 L875,695.3 L876,695.3 L877,696.5 L878,692.8 L879,696.6 L880,694.1 L881,696.6 L882,696.3 L883,693.4 L884,695.1 L885,695.1 L886,695.8 L887,697.9 L888,695.8 L889,695.5 L890,694.2 L891,695.9 L892,695.7 L893,696.6 L894,693.6 L895,696.5 L896,695.2 L897,691.9 L898,695.3 L899,692.4 L900,692.5 L901,695.7 L902,695.0 L903,695.9 L904,695.0 L905,694.3 L906,696.2 L907,696.2 L908,694.0 L909,695.2 L910,696.0 L911,696.2 L912,697.0 L913,696.5 L914,695.6 L915,696.3 L916,696.2 L917,693.4 L918,695.7 L919,693.9 L920,693.8 L921,696.5 L922,696.0 L923,694.9 L924,694.3 L925,694.6 L926,693.6 L927,697.4 L928,695.1 L929,697.5 L930,693.7 L931,697.8 L932,691.3 L933,695.2 L934,693.5 L935,696.7 L936,693.6 L937,693.6 L938,696.9 L939,692.8 L940,693.7 L941,694.4 L942,694.5 L943,694.4 L944,695.7 L945,694.9 L946,697.9 L947,695.3 L948,696.4 L949,696.4 L950,694.5 L951,693.4 L952,693.1 L953,696.9 L954,696.6 L955,694.8 L956,695.6 L957,694.1 L958,694.9 L959,695.0 L960,697.7 L961,695.8 L962,693.9 L963,695.0 L964,694.0 L965,695.0 L966,696.3 L967,695.7 L968,693.6 L969,697.0 L970,694.0 L971,694.6 L972,693.8 L973,690.4 L974,693.2 L975,695.0 L976,692.4 L977,694.7 L978,696.6 L979,696.3 L980,696.0 L981,695.6 L982,685.0 L983,676.0 L984,667.0 L985,669.7 L986,667.3 L987,667.6 L988,667.1 L989,667.8 L990,666.2 L991,665.2 L992,667.8 L993,666.5 L994,667.2 L995,667.0 L996,665.7 L997,664.9 L998,668.3 L999,665.6 L1000,663.2 L1001,662.8 L1002,665.1 L1003,666.4 L1004,666.4 L1005,665.2 L1006,667.1 L1007,666.3 L1008,665.8 L1009,660.4 L1010,663.6 L1011,666.4 L1012,665.5 L1013,659.5 L1014,663.7 L1015,663.5 L1016,664.0 L1016,683.2 L1015,681.8 L1014,678.0 L1013,680.2 L1012,680.6 L1011,682.8 L1010,679.0 L1009,677.4 L1008,680.7 L1007,680.3 L1006,679.5 L1005,680.3 L1004,674.8 L1003,681.7 L1002,680.2 L1001,675.9 L1000,680.7 L999,674.3 L998,678.8 L997,679.7 L996,678.4 L995,681.0 L994,679.4 L993,679.0 L992,677.7 L991,680.7 L990,680.8 L989,679.6 L988,680.4 L987,678.8 L986,674.2 L985,676.0 L984,685.0 L983,690.0 L982,695.0 L981,700.2 L980,700.2 L979,700.2 L978,700.2 L977,700.2 L976,700.2 L975,700.2 L974,700.2 L973,700.2 L972,700.2 L971,700.2 L970,700.2 L969,700.2 L968,700.2 L967,700.2 L966,700.2 L965,700.2 L964,700.2 L963,700.2 L962,700.2 L961,700.2 L960,700.2 L959,700.2 L958,700.2 L957,700.2 L956,700.2 L955,700.2 L954,700.2 L953,700.2 L952,700.2 L951,700.2 L950,700.2 L949,700.2 L948,700.2 L947,700.2 L946,700.2 L945,700.2 L944,700.2 L943,700.2 L942,700.2 L941,700.2 L940,700.2 L939,700.2 L938,700.2 L937,700.2 L936,700.2 L935,700.2 L934,700.2 L933,700.2 L932,700.2 L931,700.2 L930,700.2 L929,700.2 L928,700.2 L927,700.2 L926,700.2 L925,700.2 L924,700.2 L923,700.2 L922,700.2 L921,700.2 L920,700.2 L919,700.2 L918,700.2 L917,700.2 L916,700.2 L915,700.2 L914,700.2 L913,700.2 L912,700.2 L911,700.2 L910,700.2 L909,700.2 L908,700.2 L907,700.2 L906,700.2 L905,700.2 L904,700.2 L903,700.2 L902,700.2 L901,700.2 L900,700.2 L899,700.2 L898,700.2 L897,700.2 L896,700.2 L895,700.2 L894,700.2 L893,700.2 L892,700.2 L891,700.2 L890,700.2 L889,700.2 L888,700.2 L887,700.2 L886,700.2 L885,700.2 L884,700.2 L883,700.2 L882,700.2 L881,700.2 L880,700.2 L879,700.2 L878,700.2 L877,700.2 L876,700.2 L875,700.2 L874,700.2 L873,700.2 L872,700.2 L871,700.2 L870,700.2 L869,700.2 L868,700.2 L867,700.2 L866,700.2 L865,700.2 L864,700.2 L863,700.2 L862,700.2 L861,700.2 L860,700.2 L859,700.2 L858,700.2 L857,700.2 L856,700.2 L855,700.2 L854,700.2 L853,700.2 L852,700.2 L851,700.2 L850,700.2 L849,700.2 L848,700.2 L847,700.2 L846,700.2 L845,700.2 L844,700.2 L843,700.2 L842,700.2 L841,700.2 L840,700.2 L839,700.2 L838,700.2 L837,700.2 L836,700.2 L835,700.2 L834,700.2 L833,700.2 L832,700.2 L831,700.2 L830,700.2 L829,700.2 L828,700.2 L827,700.2 L826,700.2 L825,700.2 L824,700.2 L823,700.2 L822,700.2 L821,700.2 L820,700.2 L819,700.2 L818,700.2 L817,700.2 L816,700.2 L815,700.2 L814,700.2 L813,700.2 L812,700.2 L811,700.2 L810,700.2 L809,700.2 L808,700.2 L807,700.2 L806,700.2 L805,700.2 L804,700.2 L803,700.2 L802,700.2 L801,700.2 L800,700.2 L799,700.2 L798,700.2 L797,700.2 L796,700.2 L795,700.2 L794,700.2 L793,700.2 L792,700.2 L791,700.2 L790,700.2 L789,700.2 L788,700.2 L787,700.2 L786,700.2 L785,700.2 L784,700.2 L783,700.2 L782,700.2 L781,700.2 L780,700.2 L779,700.2 L778,700.2 L777,700.2 L776,700.2 L775,700.2 L774,700.2 L773,700.2 L772,700.2 L771,700.2 L770,700.2 L769,700.2 L768,700.2 L767,700.2 L766,700.2 L765,700.2 L764,700.2 L763,700.2 L762,700.2 L761,700.2 L760,700.2 L759,700.2 L758,700.2 L757,700.2 L756,700.2 L755,700.2 L754,700.2 L753,700.2 L752,700.2 L751,700.2 L750,700.2 L749,700.2 L748,700.2 L747,700.2 L746,700.2 L745,700.2 L744,700.2 L743,700.2 L742,700.2 L741,700.2 L740,700.2 L739,700.2 L738,700.2 L737,700.2 L736,700.2 L735,700.2 L734,700.2 L733,700.2 L732,700.2 L731,700.2 L730,700.2 L729,700.2 L728,700.2 L727,700.2 L726,700.2 L725,700.2 L724,700.2 L723,700.2 L722,700.2 L721,700.2 L720,700.2 L719,700.2 L718,700.2 L717,700.2 L716,700.2 L715,700.2 L714,700.2 L713,700.2 L712,700.2 L711,700.2 L710,700.2 L709,700.2 L708,700.2 L707,700.2 L706,700.2 L705,700.2 L704,700.2 L703,700.2 L702,700.2 L701,700.2 L700,700.2 L699,700.2 L698,700.2 L697,700.2 L696,700.2 L695,700.2 L694,674.5 L693,676.3 L692,681.0 L691,682.6 L690,676.3 L689,678.0 L688,676.2 L687,677.9 L686,674.5 L685,675.9 L684,678.5 L683,680.0 L682,675.6 L681,677.7 L680,683.5 L679,684.2 L678,674.9 L677,676.7 L676,676.5 L675,680.0 L674,676.4 L673,678.2 L672,677.4 L671,678.8 L670,678.3 L669,679.7 L668,674.9 L667,677.2 L666,675.5 L665,676.7 L664,676.9 L663,678.9 L662,674.5 L661,676.8 L660,675.1 L659,676.1 L658,675.9 L657,677.5 L656,676.8 L655,676.8 L654,674.5 L653,675.6 L652,677.4 L651,679.7 L650,677.6 L649,680.1 L648,679.8 L647,680.7 L646,676.8 L645,676.7 L644,680.8 L643,682.0 L642,677.1 L641,677.4 L640,674.9 L639,677.8 L638,674.5 L637,675.6 L636,674.5 L635,676.2 L634,679.5 L633,682.3 L632,676.7 L631,677.8 L630,678.2 L629,678.8 L628,674.8 L627,676.0 L626,675.7 L625,679.3 L624,677.2 L623,679.2 L622,678.2 L621,679.3 L620,677.1 L619,676.5 L618,675.6 L617,676.8 L616,674.5 L615,676.5 L614,674.7 L613,676.3 L612,684.4 L611,686.2 L610,676.5 L609,678.2 L608,674.5 L607,676.7 L606,675.2 L605,676.4 L604,675.6 L603,677.5 L602,682.1 L601,682.9 L600,674.7 L599,675.8 L598,679.0 L597,679.4 L596,674.5 L595,675.6 L594,675.8 L593,677.7 L592,675.1 L591,676.5 L590,678.1 L589,680.1 L588,684.8 L587,684.3 L586,675.6 L585,678.3 L584,677.3 L583,677.6 L582,681.8 L581,682.4 L580,676.0 L579,676.3 L578,674.5 L577,675.8 L576,681.0 L575,684.3 L574,675.8 L573,676.7 L572,683.6 L571,683.9 L570,675.0 L569,678.3 L568,674.6 L567,676.6 L566,675.0 L565,676.8 L564,675.9 L563,677.0 L562,680.8 L561,682.9 L560,683.9 L559,685.4 L558,678.2 L557,680.3 L556,677.3 L555,677.5 L554,674.5 L553,674.6 L552,675.2 L551,677.5 L550,674.5 L549,676.0 L548,674.5 L547,678.2 L546,683.5 L545,683.8 L544,674.8 L543,676.3 L542,674.5 L541,674.8 L540,674.9 L539,675.4 L538,676.6 L537,678.9 L536,684.4 L535,687.0 L534,678.6 L533,678.8 L532,674.5 L531,675.3 L530,676.9 L529,677.2 L528,674.5 L527,678.4 L526,675.8 L525,676.2 L524,675.7 L523,676.9 L522,674.9 L521,676.4 L520,678.0 L519,678.6 L518,680.0 L517,680.6 L516,678.7 L515,679.9 L514,678.1 L513,678.9 L512,676.4 L511,678.2 L510,676.1 L509,677.2 L508,683.3 L507,684.6 L506,681.3 L505,679.7 L504,674.5 L503,675.5 L502,681.7 L501,683.2 L500,675.6 L499,677.0 L498,674.9 L497,676.7 L496,674.5 L495,675.5 L494,684.5 L493,685.9 L492,678.6 L491,679.8 L490,682.2 L489,683.8 L488,675.0 L487,676.0 L486,674.5 L485,676.2 L484,674.9 L483,678.2 L482,674.5 L481,677.8 L480,681.0 L479,682.4 L478,674.5 L477,677.1 L476,675.7 L475,678.2 L474,674.5 L473,675.4 L472,674.5 L471,674.4 L470,674.5 L469,674.9 L468,675.1 L467,679.7 L466,675.4 L465,677.4 L464,674.5 L463,674.6 L462,674.5 L461,675.7 L460,675.4 L459,677.7 L458,677.5 L457,679.9 L456,676.8 L455,678.9 L454,676.6 L453,678.0 L452,674.5 L451,678.9 L450,675.2 L449,677.7 L448,676.2 L447,677.7 L446,676.4 L445,676.6 L444,675.2 L443,676.7 L442,679.5 L441,681.6 L440,678.8 L439,677.8 L438,674.5 L437,676.1 L436,677.2 L435,681.0 L434,678.8 L433,681.3 L432,677.1 L431,678.1 L430,676.8 L429,678.3 L428,679.1 L427,680.3 L426,674.5 L425,676.6 L424,676.6 L423,678.6 L422,677.0 L421,678.7 L420,679.3 L419,678.7 L418,678.9 L417,680.2 L416,677.3 L415,678.4 L414,676.7 L413,678.0 L412,675.8 L411,677.9 L410,677.5 L409,677.9 L408,674.5 L407,675.5 L406,674.5 L405,674.4 L404,675.2 L403,675.1 L402,677.3 L401,676.5 L400,678.8 L399,682.8 L398,678.1 L397,677.5 L396,675.8 L395,676.5 L394,674.6 L393,674.7 L392,684.0 L391,685.8 L390,677.3 L389,678.0 L388,674.7 L387,674.9 L386,677.0 L385,680.5 L384,674.5 L383,676.1 L382,686.1 L381,687.5 L380,685.3 L379,685.8 L378,676.6 L377,677.1 L376,674.5 L375,674.6 L374,677.1 L373,677.6 L372,674.5 L371,674.9 L370,684.1 L369,684.2 L368,680.3 L367,681.8 L366,677.3 L365,678.1 L364,674.5 L363,676.3 L362,675.8 L361,676.3 L360,674.5 L359,677.3 L358,674.5 L357,677.2 L356,675.5 L355,676.2 L354,674.7 L353,676.8 L352,674.5 L351,677.1 L350,684.5 L349,684.6 L348,676.3 L347,677.2 L346,674.5 L345,675.6 L344,674.5 L343,675.4 L342,678.2 L341,678.6 L340,679.5 L339,680.4 L338,680.4 L337,682.8 L336,675.2 L335,676.8 L334,674.5 L333,675.3 L332,674.5 L331,676.2 L330,674.5 L329,676.0 L328,676.2 L327,676.7 L326,675.0 L325,676.5 L324,674.5 L323,678.3 L322,674.5 L321,677.2 L320,678.2 L319,678.2 L318,681.0 L317,682.6 L316,676.1 L315,675.6 L314,674.5 L313,674.4 L312,675.4 L311,674.9 L310,679.8 L309,681.8 L308,676.4 L307,677.1 L306,674.5 L305,674.4 L304,677.0 L303,679.3 L302,678.9 L301,680.3 L300,676.5 L299,678.1 L298,681.8 L297,684.4 L296,676.9 L295,677.5 L294,677.8 L293,679.4 L292,675.4 L291,675.6 L290,675.2 L289,677.9 L288,674.5 L287,677.4 L286,678.1 L285,679.9 L284,676.8 L283,675.7 L282,674.5 L281,675.3 L280,677.4 L279,677.5 L278,682.0 L277,681.2 L276,674.5 L275,677.0 L274,677.5 L273,678.5 L272,676.4 L271,678.2 L270,674.8 L269,678.3 L268,675.6 L267,676.6 L266,675.3 L265,677.4 L264,682.6 L263,684.0 L262,676.6 L261,676.5 L260,676.1 L259,676.3 L258,676.0 L257,677.7 L256,679.1 L255,680.2 L254,675.8 L253,677.5 L252,675.5 L251,676.0 L250,674.9 L249,677.0 L248,675.4 L247,676.9 L246,678.1 L245,679.0 L244,678.6 L243,680.1 L242,676.4 L241,678.0 L240,680.8 L239,681.3 L238,674.5 L237,674.7 L236,680.6 L235,682.2 L234,680.9 L233,682.6 L232,674.5 L231,675.7 L230,674.5 L229,675.4 L228,681.0 L227,684.7 L226,680.3 L225,682.1 L224,682.2 L223,682.8 L222,677.2 L221,680.1 L220,674.5 L219,675.6 L218,674.5 L217,674.9 L216,682.7 L215,684.2 L214,681.2 L213,681.0 L212,674.5 L211,675.4 L210,679.5 L209,680.3 L208,674.5 L207,674.5 L206,675.2 L205,677.3 L204,680.2 L203,679.5 L202,675.7 L201,676.9 L200,681.7 L199,682.4 L198,680.7 L197,682.0 L196,674.9 L195,676.4 L194,675.5 L193,677.3 L192,677.3 L191,678.5 L190,674.5 L189,676.1 L188,677.2 L187,677.1 L186,678.3 L185,677.9 L184,676.1 L183,678.0 L182,674.5 L181,675.6 L180,682.1 L179,680.9 L178,675.8 L177,677.4 L176,675.4 L175,678.1 L174,682.1 L173,684.6 L172,675.6 L171,676.8 L170,676.8 L169,676.9 L168,675.2 L167,677.9 L166,679.2 L165,681.4 L164,677.8 L163,679.6 L162,676.6 L161,676.7 L160,674.5 L159,676.2 L158,674.8 L157,675.8 L156,679.7 L155,681.2 L154,674.7 L153,676.1 L152,677.2 L151,679.5 L150,674.8 L149,674.4 L148,675.0 L147,674.7 L146,674.5 L145,674.7 L144,674.5 L143,675.1 L142,677.6 L141,679.5 L140,677.6 L139,677.5 L138,675.5 L137,676.7 L136,677.9 L135,679.6 L134,678.7 L133,679.6 L132,677.6 L131,677.9 L130,682.6 L129,684.1 L128,674.8 L127,676.2 L126,676.1 L125,676.4 L124,680.4 L123,682.1 L122,676.3 L121,677.3 L120,674.5 L119,676.5 L118,677.8 L117,677.5 L116,680.7 L115,682.7 L114,681.9 L113,684.2 L112,678.1 L111,678.7 L110,674.7 L109,677.7 L108,674.5 L107,676.5 L106,686.7 L105,687.7 L104,684.1 L103,685.3 L102,678.9 L101,680.2 L100,677.2 L99,678.6 L98,675.5 L97,676.7 L96,674.9 L95,676.1 L94,674.5 L93,676.1 L92,674.5 L91,675.6 L90,677.2 L89,678.8 L88,674.8 L87,675.9 L86,676.6 L85,677.2 L84,674.9 L83,675.1 L82,674.5 L81,675.4 L80,676.6 L79,677.3 L78,681.6 L77,683.3 L76,674.5 L75,675.6 L74,677.7 L73,679.9 L72,675.3 L71,677.2 L70,677.8 L69,680.1 L68,674.5 L67,675.8 L66,674.5 L65,676.4 L64,677.1 L63,676.7 L62,684.0 L61,684.5 L60,678.7 L59,677.8 L58,676.2 L57,677.5 L56,675.9 L55,677.5 L54,675.1 L53,676.9 L52,675.8 L51,677.3 L50,669.0 L49,669.0 L48,669.0 L47,669.0 L46,669.0 L45,669.0 L44,669.0 L43,669.0 L42,669.0 L41,669.0 L40,669.0 L39,669.0 L38,669.0 L37,669.0 L36,669.0 L35,669.0 L34,669.0 L33,669.0 L32,669.0 L31,669.0 L30,669.0 L29,669.0 L28,669.0 L27,669.0 L26,669.0 L25,669.0 L24,669.0 L23,669.0 L22,669.0 L21,669.0 L20,669.0 L19,669.0 L18,669.0 L17,669.0 Z" fill="#0404d8" stroke="#0404d8" stroke-width="0.7" shape-rendering="auto" stroke-linejoin="round"/><rect x="96.8" y="647" width="1.5" height="54" fill="#18e828"/><rect x="430.8" y="633" width="1.5" height="68" fill="#18e828"/><rect x="524.8" y="623" width="1.5" height="78" fill="#18e828"/><rect x="554.8" y="651" width="1.5" height="50" fill="#18e828"/><rect x="832.8" y="623" width="1.5" height="78" fill="#18e828"/><rect x="908.8" y="593" width="1.5" height="108" fill="#18e828"/><rect x="848.8" y="685" width="1.5" height="16" fill="#18e828"/><rect x="362.8" y="683" width="1.5" height="18" fill="#18e828"/><rect x="544.8" y="684" width="1.5" height="17" fill="#18e828"/><path d="M52,674.5H695M984,674.5H1016" stroke="#8088e8" stroke-width="1" stroke-dasharray="3 3" fill="none"/><g fill="#0404d8"><rect x="24" y="682" width="1" height="5"/><rect x="26" y="683" width="1" height="3"/><rect x="43" y="681" width="1" height="4"/><rect x="45" y="682" width="1" height="2"/><rect x="53" y="681" width="1" height="2"/></g><rect x="15" y="583" width="2" height="119" fill="#808080"/><rect x="15" y="700" width="1002" height="2" fill="#808080"/><rect x="17" y="668" width="34" height="11" fill="#fff"/><text x="20" y="596.5" font-family="Liberation Sans, sans-serif" font-size="9.4" fill="#666" style="shape-rendering:auto">2 Mb</text><text x="20" y="623.5" font-family="Liberation Sans, sans-serif" font-size="9.4" fill="#666" style="shape-rendering:auto">1 Mb</text><text x="20" y="650.5" font-family="Liberation Sans, sans-serif" font-size="9.4" fill="#666" style="shape-rendering:auto">1 Mb</text><text x="20" y="677.5" font-family="Liberation Sans, sans-serif" font-size="9.4" fill="#666" style="shape-rendering:auto">512 Kb</text><text x="29.0" y="710.2" text-anchor="middle" font-family="Liberation Sans, sans-serif" font-size="9.4" fill="#666">2:41</text><text x="59.0" y="710.2" text-anchor="middle" font-family="Liberation Sans, sans-serif" font-size="9.4" fill="#666">2:42</text><text x="88.9" y="710.2" text-anchor="middle" font-family="Liberation Sans, sans-serif" font-size="9.4" fill="#666">2:43</text><text x="118.9" y="710.2" text-anchor="middle" font-family="Liberation Sans, sans-serif" font-size="9.4" fill="#666">2:44</text><text x="148.8" y="710.2" text-anchor="middle" font-family="Liberation Sans, sans-serif" font-size="9.4" fill="#666">2:45</text><text x="178.8" y="710.2" text-anchor="middle" font-family="Liberation Sans, sans-serif" font-size="9.4" fill="#666">2:46</text><text x="208.8" y="710.2" text-anchor="middle" font-family="Liberation Sans, sans-serif" font-size="9.4" fill="#666">2:47</text><text x="238.7" y="710.2" text-anchor="middle" font-family="Liberation Sans, sans-serif" font-size="9.4" fill="#666">2:48</text><text x="268.7" y="710.2" text-anchor="middle" font-family="Liberation Sans, sans-serif" font-size="9.4" fill="#666">2:49</text><text x="298.6" y="710.2" text-anchor="middle" font-family="Liberation Sans, sans-serif" font-size="9.4" fill="#666">2:50</text><text x="328.6" y="710.2" text-anchor="middle" font-family="Liberation Sans, sans-serif" font-size="9.4" fill="#666">2:51</text><text x="358.6" y="710.2" text-anchor="middle" font-family="Liberation Sans, sans-serif" font-size="9.4" fill="#666">2:52</text><text x="388.5" y="710.2" text-anchor="middle" font-family="Liberation Sans, sans-serif" font-size="9.4" fill="#666">2:53</text><text x="418.5" y="710.2" text-anchor="middle" font-family="Liberation Sans, sans-serif" font-size="9.4" fill="#666">2:54</text><text x="448.4" y="710.2" text-anchor="middle" font-family="Liberation Sans, sans-serif" font-size="9.4" fill="#666">2:55</text><text x="478.4" y="710.2" text-anchor="middle" font-family="Liberation Sans, sans-serif" font-size="9.4" fill="#666">2:56</text><text x="508.4" y="710.2" text-anchor="middle" font-family="Liberation Sans, sans-serif" font-size="9.4" fill="#666">2:57</text><text x="538.3" y="710.2" text-anchor="middle" font-family="Liberation Sans, sans-serif" font-size="9.4" fill="#666">2:58</text><text x="568.3" y="710.2" text-anchor="middle" font-family="Liberation Sans, sans-serif" font-size="9.4" fill="#666">2:59</text><text x="598.2" y="710.2" text-anchor="middle" font-family="Liberation Sans, sans-serif" font-size="9.4" fill="#666">3:00</text><text x="628.2" y="710.2" text-anchor="middle" font-family="Liberation Sans, sans-serif" font-size="9.4" fill="#666">3:01</text><text x="658.2" y="710.2" text-anchor="middle" font-family="Liberation Sans, sans-serif" font-size="9.4" fill="#666">3:02</text><text x="688.1" y="710.2" text-anchor="middle" font-family="Liberation Sans, sans-serif" font-size="9.4" fill="#666">3:03</text><text x="718.1" y="710.2" text-anchor="middle" font-family="Liberation Sans, sans-serif" font-size="9.4" fill="#666">3:04</text><text x="748.0" y="710.2" text-anchor="middle" font-family="Liberation Sans, sans-serif" font-size="9.4" fill="#666">3:05</text><text x="778.0" y="710.2" text-anchor="middle" font-family="Liberation Sans, sans-serif" font-size="9.4" fill="#666">3:06</text><text x="808.0" y="710.2" text-anchor="middle" font-family="Liberation Sans, sans-serif" font-size="9.4" fill="#666">3:07</text><text x="837.9" y="710.2" text-anchor="middle" font-family="Liberation Sans, sans-serif" font-size="9.4" fill="#666">3:08</text></svg>
<div class="abs" style="left:852px;top:682px;width:176px;height:58px;background:rgba(74,90,118,0.94)">
<svg class="abs" style="left:0;top:0" width="176" height="58" viewBox="0 0 176 58">
<circle cx="17.8" cy="12.3" r="1.8" fill="#05060c"/>
<path d="M23 11.2 L28 10.2 L32 8.4 L36 6.8 L50 6.2 L62 6.4 L74 6.5 Q77.4 6.8 77.2 10 L76.9 14.2 L30 14.4 L23 14 Z" fill="#05060c"/>
<g fill="#fff">
<path d="M16.5 18.7 H72.4 Q75.9 18.7 75.3 21.8 L70.9 47.6 Q70.3 50.6 67.2 50.6 H28 Q24.8 50.6 24.8 47.5 V45 H17.2 A2.05 2.05 0 0 1 17.2 40.9 H31.9 A2.1 2.1 0 0 0 31.9 36.7 H27.7 A2.05 2.05 0 0 1 27.7 32.6 H33.9 A1.4 1.4 0 0 0 33.9 29.8 H23.7 A1.9 1.9 0 0 1 23.7 26 H37.2 A1.55 1.55 0 0 0 37.2 22.9 H16.5 A2.1 2.1 0 0 1 16.5 18.7 Z"/>
<rect x="7.4" y="18.7" width="4.6" height="4.2" rx="2.1"/>
<rect x="14.8" y="26" width="4.4" height="3.8" rx="1.9"/>
<rect x="1.7" y="40.9" width="11.5" height="4.1" rx="2.05"/>
</g>
<text x="0" y="0" transform="translate(41.2 45.6) scale(1.08 1)" font-family="Liberation Sans, sans-serif" font-weight="bold" font-style="italic" font-size="30" fill="#f2181c" stroke="#f2181c" stroke-width="1.7" stroke-linejoin="miter">K</text>
<text x="80.5" y="18.8" font-family="Liberation Sans, sans-serif" font-weight="bold" font-style="italic" font-size="16" fill="#fff">Cloudcore</text>
<text x="0" y="0" font-family="Liberation Sans, Noto Sans CJK SC, sans-serif" font-weight="900" font-size="31" fill="#fff" stroke="#fff" stroke-width="1.3" transform="translate(77 47.6) skewX(-12) scale(1.02 0.97)">科华云</text>
</svg></div>
</div></body></html>
